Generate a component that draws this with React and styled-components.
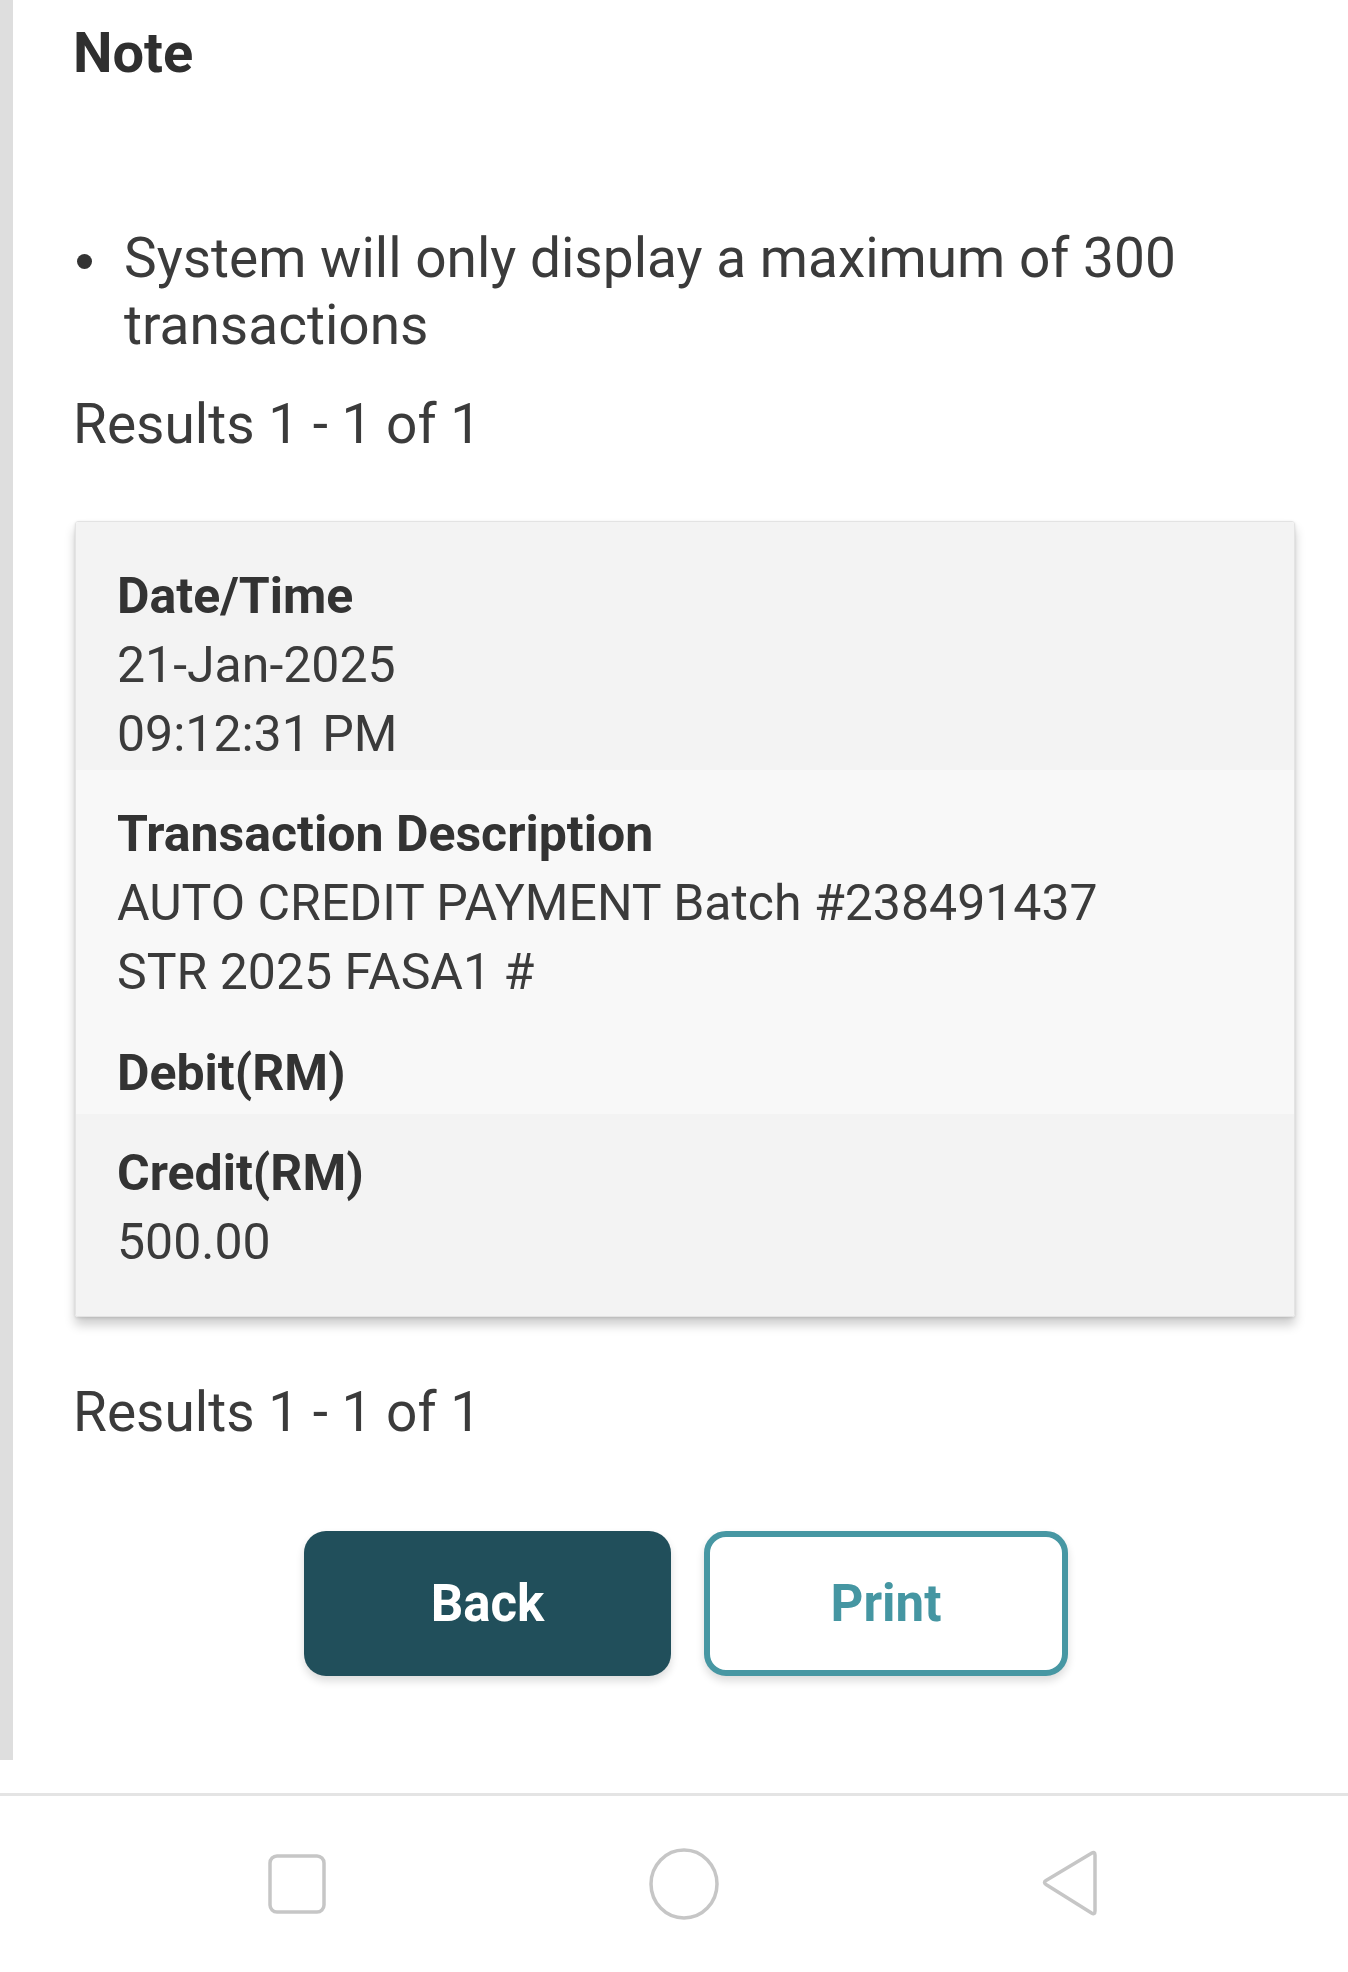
import styled, { createGlobalStyle } from "styled-components";

const GlobalStyle = createGlobalStyle`
  body {
    margin: 0;
    background: #ffffff;
    font-family: Roboto, "Noto Sans", "Liberation Sans", sans-serif;
    color: #3b3b3b;
  }
`;

const App = () => {
  return (
    <Page>
      <GlobalStyle />
      <Main>
        <NoteTitle>Note</NoteTitle>
        <NoteList>
          <NoteItem>
            <Dot />
            <span>System will only display a maximum of 300 transactions</span>
          </NoteItem>
        </NoteList>
        <Results>Results 1 - 1 of 1</Results>

        <Card>
          <Row $shade="#f3f3f3" $pad="40px 0 1px">
            <Field>
              <Label>Date/Time</Label>
              <Value>21-Jan-2025</Value>
              <Value>09:12:31 PM</Value>
            </Field>
          </Row>
          <Row $shade="#f8f8f8" $pad="30px 0 6px">
            <Field>
              <Label>Transaction Description</Label>
              <Value>AUTO CREDIT PAYMENT Batch #238491437</Value>
              <Value>STR 2025 FASA1 #</Value>
            </Field>
            <Field $gap="32px">
              <Label>Debit(RM)</Label>
            </Field>
          </Row>
          <Row $shade="#f3f3f3" $pad="25px 0 39px">
            <Field>
              <Label>Credit(RM)</Label>
              <Value>500.00</Value>
            </Field>
          </Row>
        </Card>

        <Results $top="62px">Results 1 - 1 of 1</Results>

        <ButtonRow>
          <BackButton>Back</BackButton>
          <PrintButton>Print</PrintButton>
        </ButtonRow>
      </Main>

      <NavBar>
        <NavSlot>
          <svg width="60" height="62" viewBox="0 0 60 62">
            <rect x="3" y="3" width="54" height="56" rx="7" fill="none" stroke="#c6c6c6" strokeWidth="3.5" />
          </svg>
        </NavSlot>
        <NavSlot>
          <svg width="74" height="74" viewBox="0 0 74 74">
            <ellipse cx="37" cy="37" rx="33" ry="34" fill="none" stroke="#c6c6c6" strokeWidth="3.5" />
          </svg>
        </NavSlot>
        <NavSlot>
          <svg width="62" height="70" viewBox="0 0 62 70">
            <path
              d="M55 6 Q55 2 51.5 4.2 L6 31.5 Q3 33.5 6 35.5 L51.5 64 Q55 66 55 62 Z"
              fill="none"
              stroke="#c6c6c6"
              strokeWidth="3.5"
              strokeLinejoin="round"
            />
          </svg>
        </NavSlot>
      </NavBar>
    </Page>
  );
};

const Page = styled.div`
  width: 1348px;
  min-height: 1972px;
  display: flex;
  flex-direction: column;
  background: #ffffff;
`;

const Main = styled.main`
  border-left: 13px solid #dedede;
  padding: 18px 53px 84px 60px;
  display: flex;
  flex-direction: column;
`;

const NoteTitle = styled.h2`
  margin: 0;
  font-size: 56px;
  line-height: 70px;
  font-weight: 700;
  color: #2f2f2f;
`;

const NoteList = styled.ul`
  margin: 137px 0 0;
  padding: 0;
  list-style: none;
`;

const NoteItem = styled.li`
  display: flex;
  align-items: flex-start;
  font-size: 55px;
  line-height: 67px;
  color: #3b3b3b;
`;

const Dot = styled.span`
  flex: none;
  width: 15px;
  height: 15px;
  border-radius: 50%;
  background: #333333;
  margin: 29px 32px 0 4px;
`;

const Results = styled.p`
  margin: ${(p) => p.$top || "32px"} 0 0;
  font-size: 55px;
  line-height: 67px;
  color: #3b3b3b;
`;

const Card = styled.section`
  margin: 63px 0 0 2px;
  border: 1px solid #e3e3e3;
  border-radius: 3px;
  overflow: hidden;
  box-shadow: 0 8px 11px rgba(0, 0, 0, 0.2), 0 1px 3px rgba(0, 0, 0, 0.12);
`;

const Row = styled.div`
  background: ${(p) => p.$shade};
  padding: ${(p) => p.$pad};
  padding-left: 41px;
  padding-right: 41px;
`;

const Field = styled.div`
  margin-top: ${(p) => p.$gap || "0"};
  display: flex;
  flex-direction: column;
  font-size: 50px;
  line-height: 69px;
`;

const Label = styled.div`
  font-weight: 700;
  color: #333333;
`;

const Value = styled.div`
  color: #3b3b3b;
`;

const ButtonRow = styled.div`
  margin-top: 85px;
  display: flex;
  justify-content: center;
  gap: 33px;
  padding-left: 4px;
`;

const BaseButton = styled.button`
  width: 367px;
  height: 145px;
  border-radius: 22px;
  font-family: Roboto, "Liberation Sans", sans-serif;
  font-size: 51px;
  font-weight: 700;
  cursor: pointer;
  box-shadow: 0 5px 8px rgba(0, 0, 0, 0.14);
`;

const BackButton = styled(BaseButton)`
  background: #214f5b;
  color: #ffffff;
  border: none;
`;

const PrintButton = styled(BaseButton)`
  width: 364px;
  background: #ffffff;
  color: #4596a2;
  border: 6px solid #4797a3;
`;

const NavBar = styled.nav`
  margin-top: 33px;
  border-top: 3px solid #e4e4e4;
  height: 176px;
  display: flex;
  align-items: center;
  justify-content: center;
  gap: 287px;
  padding-left: 20px;
`;

const NavSlot = styled.div`
  width: 100px;
  display: flex;
  justify-content: center;
  align-items: center;
`;

export default App;
